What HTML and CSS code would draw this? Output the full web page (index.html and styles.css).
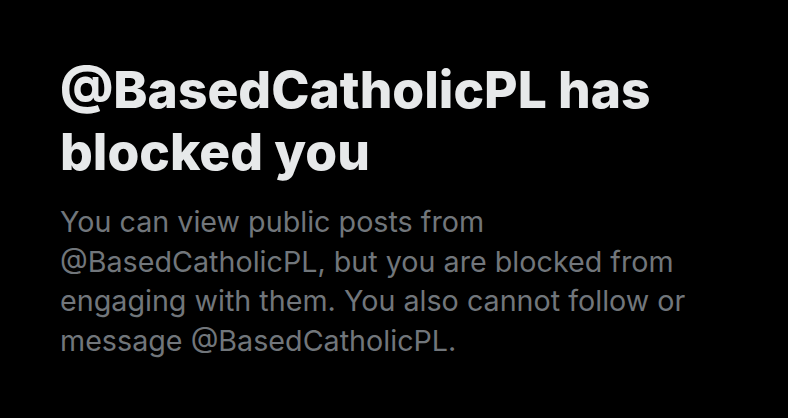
FILE: index.html
```html
<!DOCTYPE html>
<html lang="en">
<head>
<meta charset="utf-8">
<title>Blocked</title>
<link rel="stylesheet" href="styles.css">
</head>
<body>
<main class="empty-state">
  <h1 class="title">@BasedCatholicPL has blocked you</h1>
  <p class="subtitle">You can view public posts from @BasedCatholicPL, but you are blocked from engaging with them. You also cannot follow or message @BasedCatholicPL.</p>
</main>
</body>
</html>
```
FILE: styles.css
```css
html, body {
  margin: 0;
  padding: 0;
  background: #000;
}
body {
  width: 788px;
  height: 418px;
  overflow: hidden;
}
.empty-state {
  display: flex;
  flex-direction: column;
  gap: 20px;
  padding: 58px 60px 0 60px;
  width: 668px;
}
.title {
  margin: 0;
  font-family: Inter, "Liberation Sans", sans-serif;
  font-weight: 800;
  font-size: 51.5px;
  line-height: 62px;
  color: #e7e9ea;
}
.subtitle {
  margin: 0;
  font-family: Inter, "Liberation Sans", sans-serif;
  font-weight: 400;
  font-size: 28.7px;
  line-height: 39.5px;
  color: #71767b;
}
```
